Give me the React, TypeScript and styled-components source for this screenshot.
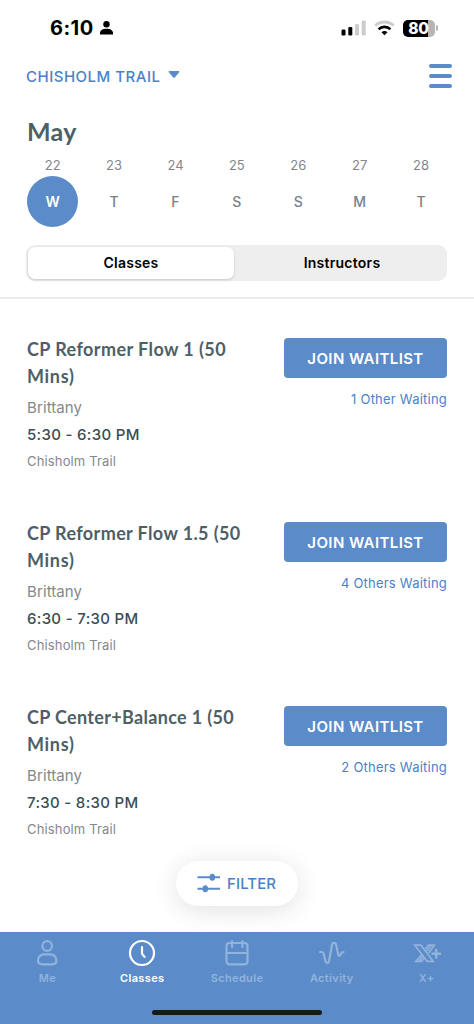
import React from 'react';
import styled, { createGlobalStyle } from 'styled-components';

const blue = '#5b8bc9';
const link = '#4a82c8';
const slate = '#4e5f66';

const GlobalStyle = createGlobalStyle`
  * { box-sizing: border-box; }
  body { margin: 0; background: #fff; font-family: Inter, "Liberation Sans", sans-serif; }
  button { font-family: inherit; border: 0; padding: 0; }
  svg { display: block; flex: none; }
`;

const Screen = styled.div`
  position: relative;
  width: 474px;
  height: 1024px;
  display: flex;
  flex-direction: column;
  overflow: hidden;
  background: #fff;
`;

const StatusBar = styled.div`
  height: 56px;
  display: flex;
  justify-content: space-between;
  align-items: center;
  padding: 0 36px 0 50px;
`;

const Clock = styled.div`
  display: flex;
  align-items: center;
  gap: 6px;
  font-size: 20px;
  font-weight: 700;
  line-height: 24px;
  letter-spacing: 0.45px;
`;

const StatusIcons = styled.div`
  display: flex;
  align-items: center;
  gap: 8px;
`;

const Battery = styled.div`
  display: flex;
  align-items: center;
  gap: 1px;
`;

const BatteryBody = styled.div`
  width: 32px;
  height: 17px;
  border-radius: 5px;
  background: linear-gradient(90deg, #000 79%, #b5b5b5 79%);
  color: #fff;
  font-size: 15.5px;
  font-weight: 800;
  line-height: 17px;
  letter-spacing: -0.2px;
  padding-right: 1px;
  text-align: center;
`;

const BatteryTip = styled.div`
  width: 2px;
  height: 6px;
  border-radius: 0 2px 2px 0;
  background: #b5b5b5;
`;

const Header = styled.header`
  height: 40px;
  display: flex;
  justify-content: space-between;
  align-items: center;
  padding: 0 22px 0 26px;
`;

const LocationPicker = styled.button`
  display: flex;
  align-items: center;
  gap: 7px;
  padding-top: 1px;
  background: none;
  color: ${link};
  font-size: 15px;
  font-weight: 500;
  line-height: 20px;
  letter-spacing: 0.5px;

  svg {
    margin-bottom: 4px;
  }
`;

const MenuButton = styled.button`
  display: flex;
  flex-direction: column;
  gap: 6px;
  width: 23px;
  background: none;
`;

const MenuBar = styled.span`
  height: 3.8px;
  border-radius: 2px;
  background: ${blue};
`;

const Month = styled.h1`
  margin: 20px 0 0 27px;
  height: 31px;
  font: 700 25px/30px Lato, sans-serif;
  letter-spacing: 0.3px;
  color: ${slate};
`;

const Week = styled.div`
  display: grid;
  grid-template-columns: repeat(7, 61.4px);
  margin: 10px 0 0 22px;
`;

const Day = styled.div`
  display: flex;
  flex-direction: column;
  align-items: center;
  color: #82868c;
`;

const DateNumber = styled.span`
  font-size: 13px;
  line-height: 16px;
`;

const Weekday = styled.span<{ $selected?: boolean }>`
  width: 51px;
  height: 51px;
  margin-top: 3px;
  border-radius: 50%;
  font-size: 14px;
  font-weight: ${p => (p.$selected ? 600 : 500)};
  line-height: 51px;
  text-align: center;
  color: ${p => (p.$selected ? '#fff' : '#7b7f86')};
  background: ${p => (p.$selected ? blue : 'transparent')};
`;

const Segments = styled.div`
  display: grid;
  grid-template-columns: 206px 1fr;
  width: 421px;
  height: 36px;
  margin: 18px 0 0 26px;
  padding: 2px;
  border-radius: 9px;
  background: #eee;
`;

const Segment = styled.button<{ $active?: boolean }>`
  padding: ${p => (p.$active ? '0 0 1px' : '0 0 1px 5px')};
  border-radius: 7px;
  background: ${p => (p.$active ? '#fff' : 'transparent')};
  box-shadow: ${p => (p.$active ? '0 1px 3px rgba(0,0,0,.16)' : 'none')};
  color: #000;
  font-size: 14px;
  font-weight: 600;
  letter-spacing: 0.25px;
`;

const ClassList = styled.main`
  flex: 1;
  min-height: 0;
  margin-top: 16px;
  padding: 38px 27px 0 27px;
  border-top: 2px solid #ececec;
`;

const ClassRow = styled.article`
  height: 184px;
  display: flex;
  justify-content: space-between;
`;

const Details = styled.div`
  width: 230px;
`;

const Title = styled.h2`
  margin: -1px 0 0;
  font: 700 18px/27px Lato, sans-serif;
  letter-spacing: 0.38px;
  color: ${slate};
`;

const TitleLine = styled.span<{ $spacing?: number }>`
  display: block;
  white-space: nowrap;
  letter-spacing: ${p => p.$spacing ?? 0.38}px;
`;

const Teacher = styled.div`
  margin-top: 8px;
  font-size: 15px;
  line-height: 20px;
  letter-spacing: 0.1px;
  color: #86888d;
`;

const Time = styled.div`
  margin-top: 7px;
  font-size: 15px;
  font-weight: 500;
  line-height: 20px;
  letter-spacing: 0.32px;
  color: #3b4d56;
`;

const Place = styled.div`
  margin-top: 7px;
  font-size: 13px;
  line-height: 18px;
  letter-spacing: 0.15px;
  color: #86888d;
`;

const Actions = styled.div`
  display: flex;
  flex-direction: column;
  align-items: flex-end;
`;

const JoinButton = styled.button`
  width: 163px;
  height: 40px;
  margin-top: 1px;
  border-radius: 4px;
  background: ${blue};
  color: #fff;
  font-size: 15px;
  font-weight: 600;
  letter-spacing: 0.4px;
`;

const Waiting = styled.div`
  margin-top: 12px;
  font-size: 13px;
  line-height: 18px;
  letter-spacing: 0.22px;
  color: ${link};
`;

const FilterButton = styled.button`
  position: absolute;
  left: 176px;
  top: 861px;
  width: 122px;
  height: 45px;
  display: flex;
  align-items: center;
  padding: 0 0 1px 21px;
  gap: 7px;
  border-radius: 23px;
  background: #fff;
  box-shadow: 0 4px 26px rgba(0, 0, 0, 0.12);
  color: ${link};
  font-size: 15px;
  font-weight: 500;
  letter-spacing: 0.1px;
`;

const TabBar = styled.nav`
  height: 92px;
  flex: none;
  display: flex;
  flex-direction: column;
  justify-content: space-between;
  align-items: center;
  background: ${blue};
  padding-bottom: 9px;
`;

const Tabs = styled.div`
  width: 100%;
  display: grid;
  grid-template-columns: repeat(5, 1fr);
`;

const Tab = styled.div<{ $active?: boolean }>`
  display: flex;
  flex-direction: column;
  align-items: center;
  padding-top: 6px;
  color: ${p => (p.$active ? '#fff' : '#92b3dc')};
  font-size: 11px;
  font-weight: 600;
  line-height: 14px;
  letter-spacing: 0.35px;
`;

const TabLabel = styled.span`
  margin-top: 3px;
`;

const HomeIndicator = styled.div`
  width: 170px;
  height: 5px;
  border-radius: 3px;
  background: #151a1c;
`;

const PersonGlyph = () => (
  <svg width="13" height="14" viewBox="0 0 13 14">
    <circle cx="6.5" cy="3.3" r="3.2" />
    <path d="M0 13.4V12C0 9.3 3 7.8 6.5 7.8S13 9.3 13 12v1.4z" />
  </svg>
);

const Signal = () => (
  <svg width="25" height="16" viewBox="0 0 25 16">
    <rect x="0.5" y="9.5" width="4" height="6" rx="1.2" />
    <rect x="7.3" y="7" width="4" height="8.5" rx="1.2" />
    <rect x="14" y="4" width="4" height="11.5" rx="1.2" fill="#ccc" />
    <rect x="20.7" y="0.5" width="4" height="15" rx="1.2" fill="#ccc" />
  </svg>
);

const Wifi = () => (
  <svg width="21" height="16" viewBox="0 0 21 16" fill="none">
    <path d="M1.3 5.6C6.4.8 14.6.8 19.7 5.6" stroke="#ccc" strokeWidth="2.8" />
    <path d="M4.6 9.2c3.2-3.1 8.6-3.1 11.8 0" stroke="#000" strokeWidth="2.7" />
    <path d="M7.5 12.2c1.8-1.6 4.2-1.6 6 0l-3 3.1z" fill="#000" />
  </svg>
);

const Caret = () => (
  <svg width="12" height="7" viewBox="0 0 11 7">
    <path d="M1 0h9a.8.8 0 0 1 .7 1.3L6.5 6.2a1.3 1.3 0 0 1-2 0L.3 1.3A.8.8 0 0 1 1 0z" fill={blue} />
  </svg>
);

const Sliders = () => (
  <svg width="23" height="20" viewBox="0 0 23 20" stroke={blue} fill={blue} strokeWidth="2">
    <path d="M.5 4.2h22.5M.5 15.7h22.5" />
    <ellipse cx="15.3" cy="4.2" rx="1.8" ry="2.5" />
    <ellipse cx="8.3" cy="15.7" rx="1.8" ry="2.5" />
  </svg>
);

const Icon = ({ children }: { children: React.ReactNode }) => (
  <svg width="30" height="30" viewBox="0 0 30 30" fill="none" stroke="currentColor" strokeWidth="2.2" strokeLinecap="round" strokeLinejoin="round">
    {children}
  </svg>
);

const tabs = [
  {
    label: 'Me',
    icon: (
      <>
        <circle cx="15.2" cy="8" r="4.8" />
        <path d="M12 16.4h6.4c3.3 0 6 2.6 6 5.8 0 2.7-1.6 4.1-4.3 4.1h-9.8c-2.7 0-4.3-1.4-4.3-4.1 0-3.2 2.7-5.8 6-5.8z" />
      </>
    ),
  },
  {
    label: 'Classes',
    active: true,
    icon: (
      <>
        <circle cx="15" cy="15" r="12" />
        <path d="M15 9v6.3c0 1.3 1 2.2 2.6 3.5" />
      </>
    ),
  },
  {
    label: 'Schedule',
    icon: (
      <>
        <rect x="4.5" y="5" width="21" height="21.3" rx="3" />
        <path d="M4.5 15h21M10 3v6M20.500 3v6" />
      </>
    ),
  },
  {
    label: 'Activity',
    icon: (
      <path d="M3 14h1.700c1.400 0 1.800.8 2.100 2l1.600 7c.7 2.800 3 2.800 3.600 0l3-16c.6-2.900 3.700-2.900 4.200 0l2 9.600c.3 1.700 1.600 1.700 2.200.3l.7-1.300c.5-1.200 1-1.600 2.500-1.600" />
    ),
  },
  {
    label: 'X+',
    icon: (
      <g strokeWidth="1.7" strokeLinecap="butt" strokeLinejoin="miter">
        <path d="M2.800 7.200h6.200l12.200 16.100h-6.200z" />
        <path d="M13.500 11.100l3-3.900h5.900l-5.700 7.700M14.800 13l4.300-5.200M10.300 15.800l-6.400 7.500h5.700l3.300-4.100M7.100 22.600l4.600-5.300" />
        <path d="M24.200 11v9.400M19.500 15.700h9.500" strokeWidth="2.400" />
      </g>
    ),
  },
];

const days = [['22', 'W'], ['23', 'T'], ['24', 'F'], ['25', 'S'], ['26', 'S'], ['27', 'M'], ['28', 'T']];

const classes = [
  { title: 'CP Reformer Flow 1 (50', spacing: 0.42, time: '5:30 - 6:30 PM', waiting: '1 Other Waiting' },
  { title: 'CP Reformer Flow 1.5 (50', spacing: 0.38, time: '6:30 - 7:30 PM', waiting: '4 Others Waiting' },
  { title: 'CP Center+Balance 1 (50', spacing: 0.33, time: '7:30 - 8:30 PM', waiting: '2 Others Waiting' },
];

export default function App() {
  return (
    <>
      <GlobalStyle />
      <Screen>
        <StatusBar>
          <Clock>6:10 <PersonGlyph /></Clock>
          <StatusIcons>
            <Signal />
            <Wifi />
            <Battery><BatteryBody>80</BatteryBody><BatteryTip /></Battery>
          </StatusIcons>
        </StatusBar>
        <Header>
          <LocationPicker>CHISHOLM TRAIL <Caret /></LocationPicker>
          <MenuButton aria-label="Menu"><MenuBar /><MenuBar /><MenuBar /></MenuButton>
        </Header>
        <Month>May</Month>
        <Week>
          {days.map(([date, name], i) => (
            <Day key={date}>
              <DateNumber>{date}</DateNumber>
              <Weekday $selected={i === 0}>{name}</Weekday>
            </Day>
          ))}
        </Week>
        <Segments>
          <Segment $active>Classes</Segment>
          <Segment>Instructors</Segment>
        </Segments>
        <ClassList>
          {classes.map(c => (
            <ClassRow key={c.title}>
              <Details>
                <Title>
                  <TitleLine $spacing={c.spacing}>{c.title}</TitleLine>
                  <TitleLine $spacing={0.7}>Mins)</TitleLine>
                </Title>
                <Teacher>Brittany</Teacher>
                <Time>{c.time}</Time>
                <Place>Chisholm Trail</Place>
              </Details>
              <Actions>
                <JoinButton>JOIN WAITLIST</JoinButton>
                <Waiting>{c.waiting}</Waiting>
              </Actions>
            </ClassRow>
          ))}
        </ClassList>
        <FilterButton><Sliders />FILTER</FilterButton>
        <TabBar>
          <Tabs>
            {tabs.map(t => (
              <Tab key={t.label} $active={t.active}>
                <Icon>{t.icon}</Icon>
                <TabLabel>{t.label}</TabLabel>
              </Tab>
            ))}
          </Tabs>
          <HomeIndicator />
        </TabBar>
      </Screen>
    </>
  );
}
